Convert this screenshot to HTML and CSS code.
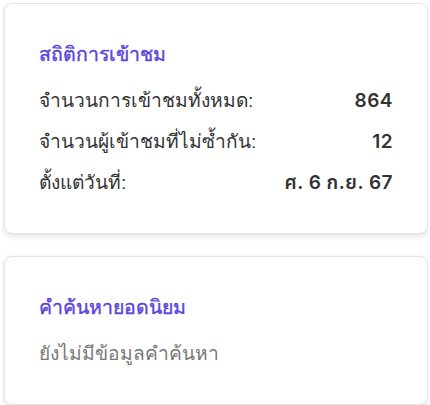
FILE: index.html
```html
<!DOCTYPE html>
<html lang="th">
<head>
  <meta charset="UTF-8">
  <meta name="viewport" content="width=device-width, initial-scale=1.0">
  <title>สถิติ</title>
  <link rel="stylesheet" href="styles.css">
</head>
<body>
  <div class="card">
    <h2 class="card-title">สถิติการเข้าชม</h2>
    <div class="stat-row">
      <span>จำนวนการเข้าชมทั้งหมด:</span>
      <span class="stat-value">864</span>
    </div>
    <div class="stat-row">
      <span>จำนวนผู้เข้าชมที่ไม่ซ้ำกัน:</span>
      <span class="stat-value">12</span>
    </div>
    <div class="stat-row">
      <span>ตั้งแต่วันที่:</span>
      <span class="stat-value">ศ. 6 ก.ย. 67</span>
    </div>
  </div>

  <div class="card">
    <h2 class="card-title">คำค้นหายอดนิยม</h2>
    <p class="empty">ยังไม่มีข้อมูลคำค้นหา</p>
  </div>
</body>
</html>
```

FILE: styles.css
```css
body {
  margin: 3px 2px 0 2px;
  font-family: "Liberation Sans", sans-serif;
  background-color: #fff;
  color: #333;
}

.card {
  background-color: #fff;
  border: 1px solid #e4e4e4;
  border-radius: 8px;
  box-shadow: 0 2px 6px rgba(0, 0, 0, 0.12);
  padding: 36px 34px 36px 34px;
  margin: 0 0 22px 2px;
}

.card:last-child {
  margin-bottom: 0;
}

.card-title {
  margin: 0 0 19px 0;
  font-size: 19.5px;
  font-weight: normal;
  -webkit-text-stroke: 0.4px currentColor;
  line-height: 28px;
  color: #5a44dc;
}

.stat-row {
  display: flex;
  justify-content: space-between;
  font-size: 19.2px;
  line-height: 28px;
  margin-bottom: 13px;
}

.stat-row:last-child {
  margin-bottom: 0;
}

.stat-value {
  font-family: Inter, "Noto Sans Thai", sans-serif;
  font-weight: 600;
  font-size: 19px;
  letter-spacing: 0.5px;
}

.empty {
  margin: 0;
  font-size: 19.2px;
  line-height: 28px;
  color: #777;
}
```
